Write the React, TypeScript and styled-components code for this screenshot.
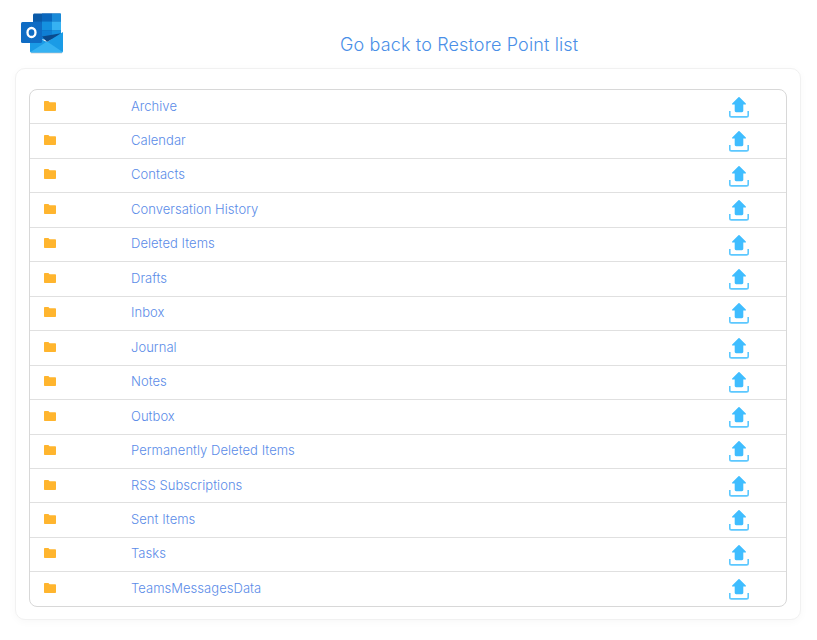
import React from "react";
import styled, { createGlobalStyle } from "styled-components";

const GlobalStyle = createGlobalStyle`
  html, body {
    margin: 0;
    padding: 0;
    background: #fff;
    font-family: Inter, "Liberation Sans", sans-serif;
  }
`;

const Page = styled.div`
  width: 817px;
  height: 640px;
  padding: 12px 16px 0 15px;
  box-sizing: border-box;
`;

const Header = styled.header`
  display: flex;
  height: 56px;
`;

const LogoBox = styled.div`
  width: 50px;
  padding-left: 5px;
`;

const BackLink = styled.a`
  margin: 22px 0 0 270px;
  font-size: 18px;
  line-height: 22px;
  font-weight: 300;
  letter-spacing: 0.14px;
  color: #4a8fe7;
  white-space: nowrap;
`;

const Card = styled.section`
  height: 552px;
  box-sizing: border-box;
  padding: 20px 13px 13px;
  background: #fff;
  border: 1px solid #f1f1f1;
  border-radius: 10px;
  box-shadow: 0 2px 8px rgba(0, 0, 0, 0.03);
`;

const FolderTable = styled.div`
  display: grid;
  grid-template-rows: 33.48px repeat(14, 34.455px);
  box-sizing: border-box;
  border: 1px solid #d8d8d8;
  border-radius: 8px;
`;

const Row = styled.div`
  display: grid;
  grid-template-columns: 101px 598px 57px;
  align-items: center;
  padding-bottom: 2.4px;
  border-top: 1px solid #e0e0e0;

  &:first-child {
    border-top: 0;
  }
`;

const FolderCell = styled.div`
  display: flex;
  padding-left: 14px;
`;

const FolderName = styled.a`
  font-size: 13px;
  font-weight: 300;
  letter-spacing: 0.04px;
  color: #5b8ce8;
`;

const RestoreCell = styled.div`
  display: flex;
  margin-top: 3.4px;
`;

const FolderIcon = () => (
  <svg width="12" height="10" viewBox="0 0 12 10">
    <path
      d="M1 0h3.400l1.200 1.300H11c.6 0 1 .4 1 1V9c0 .6-.4 1-1 1H1c-.6 0-1-.4-1-1V1c0-.6.4-1 1-1z"
      fill="#ffb52e"
    />
  </svg>
);

const RestoreIcon = () => (
  <svg width="20" height="21" viewBox="0 0 20 21">
    <path
      d="M9.200.4a1.100 1.100 0 0 1 1.600 0l6 6.200c.4.400.1 1-.4 1h-2.100v6.200c0 .8-.6 1.400-1.400 1.400H7.100c-.8 0-1.400-.6-1.400-1.400V7.600H3.600c-.5 0-.8-.6-.4-1z"
      fill="#3fbdff"
    />
    <path
      d="M.8 14v4.200c0 1 .8 1.700 1.700 1.700h15c.9 0 1.700-.7 1.700-1.700V14"
      fill="none"
      stroke="#5cc8ff"
      strokeWidth="1.600"
    />
  </svg>
);

const OutlookLogo = () => (
  <svg width="44" height="42" viewBox="0 0 44 42">
    <path d="M13 3c0-.8.7-1.500 1.500-1.500h25c.8 0 1.500.7 1.500 1.500v22H13z" fill="#0a5aa8" />
    <rect x="22" y="1.500" width="10" height="8" fill="#0a67bd" />
    <rect x="32" y="1.500" width="9" height="8" fill="#1a8ad8" />
    <rect x="13" y="9.500" width="9" height="9" fill="#0a67bd" />
    <rect x="22" y="9.500" width="10" height="9" fill="#1490df" />
    <rect x="32" y="9.500" width="9" height="9" fill="#36b2f2" />
    <rect x="13" y="18.500" width="9" height="9" fill="#0a5aa8" />
    <rect x="22" y="18.500" width="10" height="9" fill="#0f7fd4" />
    <rect x="32" y="18.500" width="9" height="9" fill="#1490df" />
    <path d="M43 20 27 30 10 22v17c0 1 .8 1.500 1.800 1.500h29.400c1 0 1.800-.5 1.800-1.500z" fill="#1a9be6" />
    <path d="M22 24.500 41 21.200 27 30z" fill="#0a4a8c" />
    <path d="M10.500 40c.3.300.8.500 1.300.5h29.400c.6 0 1.200-.2 1.500-.6L27 29.500z" fill="#36b2f2" />
    <path d="M11 41.200h31" stroke="#000" strokeOpacity="0.12" strokeWidth="1" />
    <rect x="1" y="10" width="21" height="21" rx="1.500" fill="#0f6cc4" />
    <ellipse cx="11.500" cy="20.500" rx="4" ry="4.500" fill="none" stroke="#fff" strokeWidth="2.300" />
  </svg>
);

const folders = [
  "Archive",
  "Calendar",
  "Contacts",
  "Conversation History",
  "Deleted Items",
  "Drafts",
  "Inbox",
  "Journal",
  "Notes",
  "Outbox",
  "Permanently Deleted Items",
  "RSS Subscriptions",
  "Sent Items",
  "Tasks",
  "TeamsMessagesData",
];

export default function App() {
  return (
    <Page>
      <GlobalStyle />
      <Header>
        <LogoBox>
          <OutlookLogo />
        </LogoBox>
        <BackLink>Go back to Restore Point list</BackLink>
      </Header>
      <Card>
        <FolderTable>
          {folders.map((name) => (
            <Row key={name}>
              <FolderCell>
                <FolderIcon />
              </FolderCell>
              <FolderName>{name}</FolderName>
              <RestoreCell>
                <RestoreIcon />
              </RestoreCell>
            </Row>
          ))}
        </FolderTable>
      </Card>
    </Page>
  );
}
